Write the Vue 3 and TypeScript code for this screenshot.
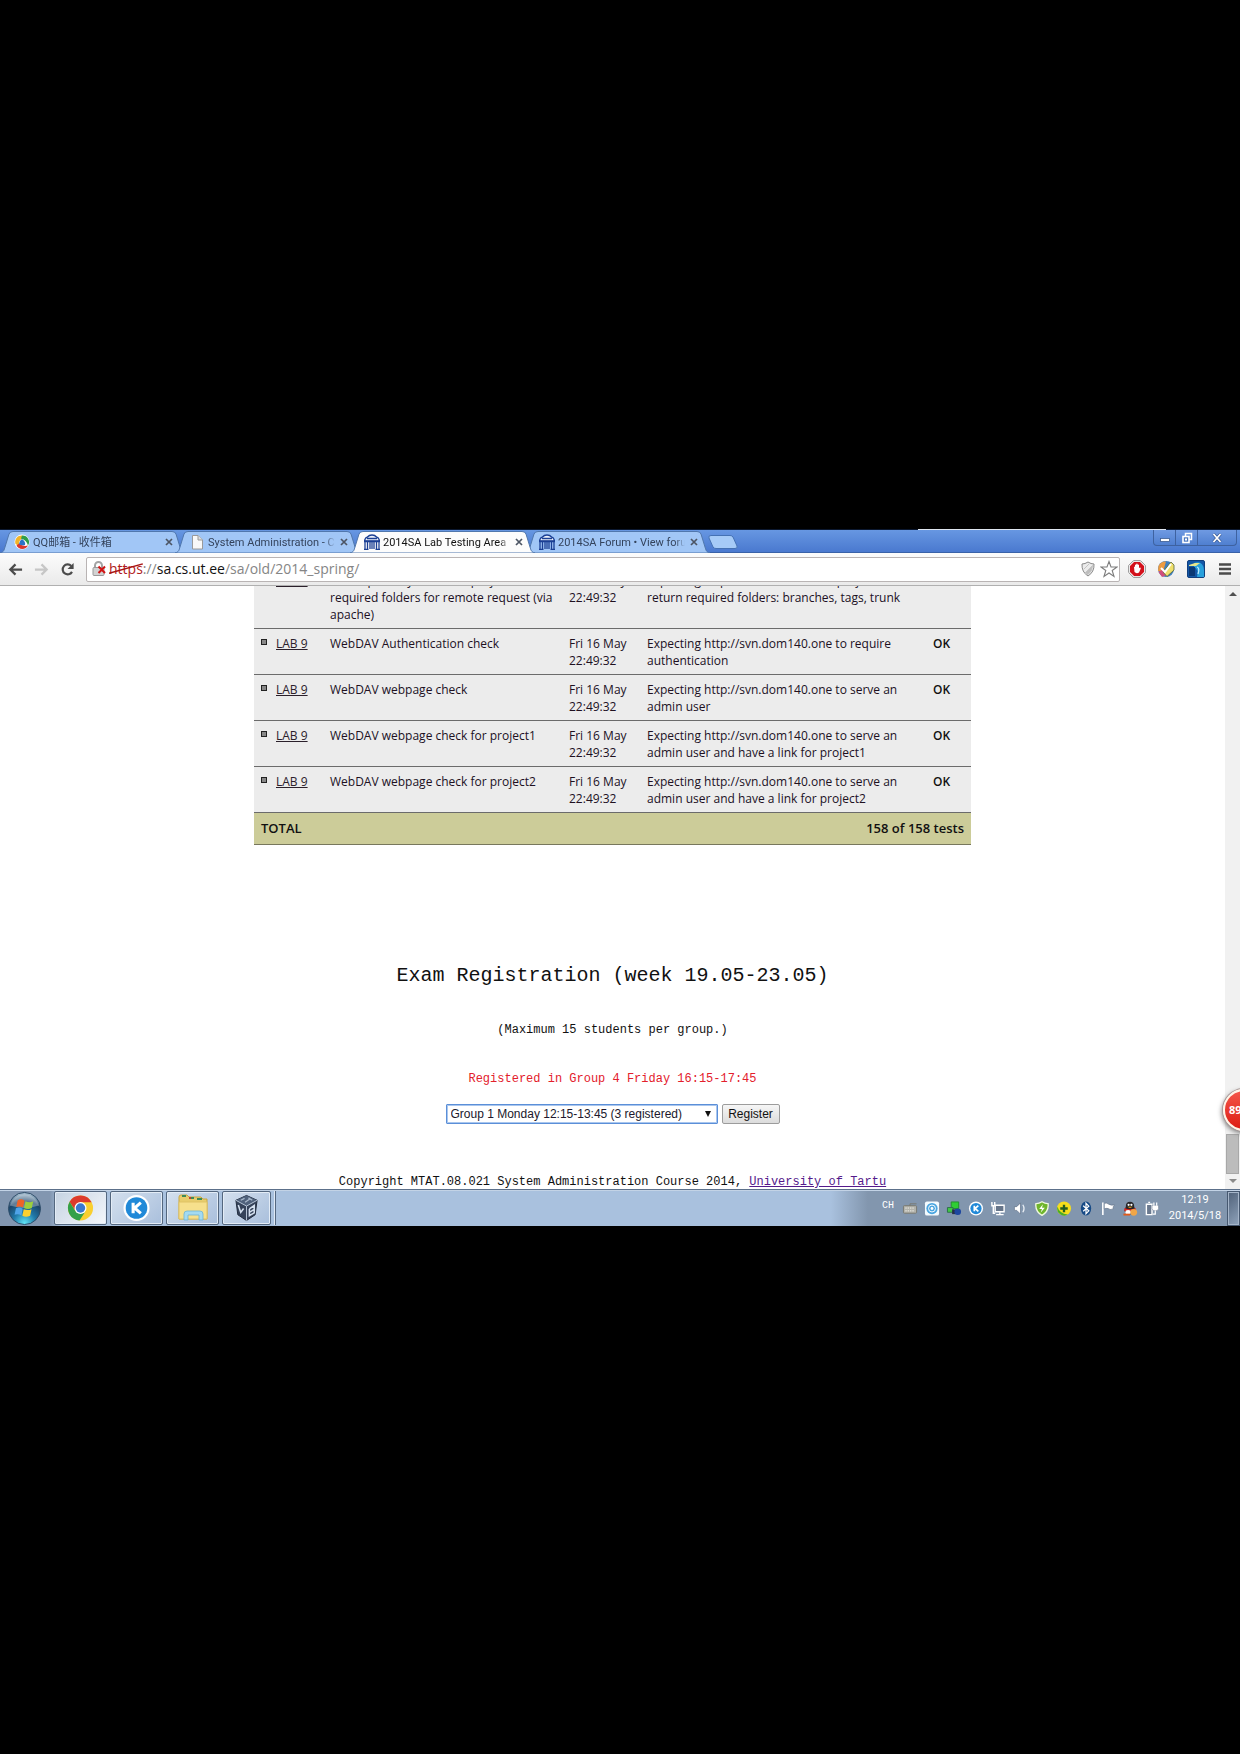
<script setup lang="ts">
import { ref } from 'vue'

interface Tab { title: string; icon: 'qq' | 'page' | 'uni'; active?: boolean }
interface Test { name: string; time: string; text: string; result: string }

const tabs: Tab[] = [
  { title: 'QQ邮箱 - 收件箱', icon: 'qq' },
  { title: 'System Administration - C', icon: 'page' },
  { title: '2014SA Lab Testing Area f', icon: 'uni', active: true },
  { title: '2014SA Forum • View foru', icon: 'uni' },
]

const time = 'Fri 16 May\n22:49:32'
const tests: Test[] = [
  { name: 'SVN repository check for project2\nrequired folders for remote request (via\napache)', time, text: 'Expecting http://svn.dom140.one/project2 to\nreturn required folders: branches, tags, trunk', result: 'OK' },
  { name: 'WebDAV Authentication check', time, text: 'Expecting http://svn.dom140.one to require\nauthentication', result: 'OK' },
  { name: 'WebDAV webpage check', time, text: 'Expecting http://svn.dom140.one to serve an\nadmin user', result: 'OK' },
  { name: 'WebDAV webpage check for project1', time, text: 'Expecting http://svn.dom140.one to serve an\nadmin user and have a link for project1', result: 'OK' },
  { name: 'WebDAV webpage check for project2', time, text: 'Expecting http://svn.dom140.one to serve an\nadmin user and have a link for project2', result: 'OK' },
]

const groups = ['Group 1 Monday 12:15-13:45 (3 registered)']
const group = ref(groups[0])
</script>

<template>
  <div class="stage">
    <div class="screen">
      <div class="behind"></div>
      <header class="titlebar">
        <nav class="tabs">
          <div v-for="t in tabs" :key="t.title" class="tab" :class="{ active: t.active }">
            <svg class="shape" viewBox="0 0 185 22" preserveAspectRatio="none">
              <path d="M0 22 C4 21 4 19 5 16 L9 3 Q10 .5 13 .5 H172 Q175 .5 176 3 L180 16 C181 19 181 21 185 22 Z" />
            </svg>
            <svg v-if="t.icon === 'qq'" class="fav" viewBox="0 0 16 16">
              <circle cx="8" cy="8" r="7.500" fill="#fff" />
              <path d="M1.500 10 A6.500 6.500 0 0 1 8 1.500 L10 4.500 Q4.500 5 5 11 Q3 11.500 1.500 10" fill="#f0b429" />
              <path d="M8 1.500 A6.500 6.500 0 0 1 14 11.500 Q12.500 6 7 4.500 Z" fill="#2f9e4a" />
              <path d="M2.500 11.500 A6.500 6.500 0 0 0 14 11.500 Q9 13 5 9.500 Z" fill="#d9372c" />
              <path d="M8 5 Q12 8 11 11 Q7 12 5 10 Q5.500 6.500 8 5 Z" fill="#2a72c8" />
            </svg>
            <svg v-else-if="t.icon === 'page'" class="fav" viewBox="0 0 16 16">
              <path d="M3.500 1.500 H9 L13.500 6 V15 H3.500 Z" fill="#f8f8f8" stroke="#9a9a9a" />
              <path d="M9 1.500 V6 H13.500" fill="#ddd" stroke="#9a9a9a" />
            </svg>
            <svg v-else class="fav" viewBox="0 0 16 16">
              <path d="M.5 7 Q1 3.500 3.500 3 Q5 1 8 1 Q11 1 12.500 3 Q15 3.500 15.500 7 Z" fill="#eef3fb" stroke="#1b3f94" stroke-width="1.300" />
              <path d="M0 7.500 H16 M3 4.500 H13 M1 8 V16 M3.500 8 V16 M6 8 V15 M8 8 V15 M10 8 V15 M12.500 8 V16 M15 8 V16 M0 15.500 H4.500 M11.500 15.500 H16" stroke="#1b3f94" stroke-width="1.300" fill="none" />
            </svg>
            <span class="title">{{ t.title }}</span>
            <button class="close" aria-label="Close tab">
              <svg viewBox="0 0 8 8"><path d="M1 1 L7 7 M7 1 L1 7" stroke="#4c5564" stroke-width="1.700" /></svg>
            </button>
          </div>
        </nav>
        <button class="newtab" aria-label="New tab">
          <svg viewBox="0 0 30 14"><path d="M3 .5 H22 Q24 .5 25 2 L29 11 Q30 13.500 27 13.500 H8 Q6 13.500 5 12 L1 3 Q0 .5 3 .5" fill="#a6cbf7" stroke="#4572b4" /></svg>
        </button>
        <div class="winctl">
          <button aria-label="Minimize"><svg viewBox="0 0 12 12"><rect x="1.500" y="6.500" width="9" height="3" fill="#fff" stroke="#3c5c92" stroke-width=".8" /></svg></button>
          <button aria-label="Restore"><svg viewBox="0 0 12 12"><path d="M4.500 4 V1.500 H10.500 V7.500 H8" fill="none" stroke="#fff" stroke-width="1.500" /><rect x="2" y="4.500" width="6" height="6" fill="#4c78c0" stroke="#fff" stroke-width="1.600" /><rect x="4" y="6.500" width="2" height="2" fill="#fff" /></svg></button>
          <button class="wide" aria-label="Close"><svg viewBox="0 0 12 12"><path d="M2.500 2 L9.500 10 M9.500 2 L2.500 10" stroke="#35558f" stroke-width="3" /><path d="M2.500 2 L9.500 10 M9.500 2 L2.500 10" stroke="#fff" stroke-width="1.800" /></svg></button>
        </div>
      </header>

      <div class="toolbar">
        <div class="nav">
          <button aria-label="Back"><svg viewBox="0 0 16 16"><path d="M15 8 H3 M8 2.500 L2.500 8 L8 13.500" fill="none" stroke="#4b4b4b" stroke-width="2.400" /></svg></button>
          <button aria-label="Forward"><svg viewBox="0 0 16 16"><path d="M1 8 H13 M8 2.500 L13.500 8 L8 13.500" fill="none" stroke="#c6c6c6" stroke-width="2.400" /></svg></button>
          <button aria-label="Reload"><svg viewBox="0 0 16 16"><path d="M12.800 10.500 A5.300 5.300 0 1 1 12 4.200" fill="none" stroke="#4b4b4b" stroke-width="2.300" /><path d="M14.500 1 V7.500 H8 Z" fill="#4b4b4b" /></svg></button>
        </div>
        <div class="omnibox">
          <svg class="lock" viewBox="0 0 14 16">
            <path d="M3 7 V4.500 A3.500 3.500 0 0 1 10 4.500 V7" fill="none" stroke="#a4a4a4" stroke-width="2" />
            <rect x="1" y="6.500" width="11" height="8" rx="1" fill="#d2d2d2" stroke="#999" />
            <path d="M6.500 5.500 L13 12 M13 5.500 L6.500 12" stroke="#d21414" stroke-width="2" />
          </svg>
          <div class="url"><span class="scheme">https<svg viewBox="0 0 32 14" preserveAspectRatio="none"><path d="M0 12 L32 1" stroke="#a81313" stroke-width="1.600" /></svg></span>://<span class="host">sa.cs.ut.ee</span>/sa/old/2014_spring/</div>
          <svg class="mini" viewBox="0 0 16 16"><path d="M8 1 Q11 3 14 3 Q14.500 11 8 15 Q1.500 11 2 3 Q5 3 8 1Z" fill="#ececec" stroke="#8a8a8a" /><path d="M5 12 L12.500 4.500 Q12.500 10 8 13.500Z M4 8 L9 3" fill="#bdbdbd" stroke="#c4c4c4" /></svg>
          <svg class="mini star" viewBox="0 0 18 18"><path d="M9 1.500 L11 7 H17 L12.200 10.500 L14 16.500 L9 13 L4 16.500 L5.800 10.500 L1 7 H7 Z" fill="#fff" stroke="#7d7d7d" stroke-width="1.100" /></svg>
        </div>
        <div class="ext">
          <button aria-label="AdBlock"><svg viewBox="0 0 18 18"><path d="M5.500 .7 H12.500 L17.300 5.500 V12.500 L12.500 17.300 H5.500 L.7 12.500 V5.500 Z" fill="#fff" stroke="#8b8b8b" /><path d="M6 2 H12 L16 6 V12 L12 16 H6 L2 12 V6 Z" fill="#d3111b" /><path d="M6 7 Q6.500 6 7 7 V5 Q7.500 4 8.200 5 V4 Q9 3.200 9.700 4 V5 Q10.500 4 11 5 V8 Q12.500 7 12.800 8.500 L11 12.500 Q8.500 14 6.500 12 Z" fill="#fff" /></svg></button>
          <button aria-label="Editor"><svg viewBox="0 0 18 18"><circle cx="9" cy="9" r="8" fill="#3f7fbe" /><path d="M1.500 6 Q4 1 9 1.500 L6 12 L1 11 Z" fill="#ed9b3f" /><path d="M1.500 12 L6 9 L10 15 L5 17 Z" fill="#d14f7c" /><path d="M6 12 L14 2 L17 5 V10 L10 16.500 Z" fill="#efe06c" stroke="#56663c" stroke-width=".8" /><path d="M4 8 L8 12 L14 4" fill="none" stroke="#fff" stroke-width="2" /></svg></button>
          <button aria-label="Capture"><svg viewBox="0 0 18 18"><rect x=".5" y=".5" width="17" height="17" rx="1.500" fill="#1356a6" stroke="#103f7d" /><path d="M7 3 Q16 0 17 10 V17 H10 Q12 9 7 7 Z" fill="#28a0dc" /><path d="M2 5 L8 3 H13 L9 6 H2 Z" fill="#e6e58b" /><path d="M2 7 H8 V16 H2 Z" fill="#093774" /><path d="M10 7 Q13 8 11 14" stroke="#bceaff" fill="none" stroke-width="1.300" /></svg></button>
          <button aria-label="Menu"><svg viewBox="0 0 18 18"><path d="M3 4.500 H15 M3 9 H15 M3 13.500 H15" stroke="#4b4b4b" stroke-width="2.400" /></svg></button>
        </div>
      </div>

      <div class="viewport">
        <main class="content">
          <table class="results">
            <colgroup><col class="c1" /><col class="c2" /><col class="c3" /><col class="c4" /><col class="c5" /><col class="c6" /></colgroup>
            <tbody>
              <tr v-for="(t, i) in tests" :key="i">
                <td><i class="bullet"></i></td>
                <td><a href="#">LAB 9</a></td>
                <td>{{ t.name }}</td>
                <td>{{ t.time }}</td>
                <td>{{ t.text }}</td>
                <td class="ok">{{ t.result }}</td>
              </tr>
            </tbody>
            <tfoot>
              <tr><th colspan="3" class="total">TOTAL</th><th colspan="3" class="count">158 of 158 tests</th></tr>
            </tfoot>
          </table>
          <h2>Exam Registration (week 19.05-23.05)</h2>
          <p class="max">(Maximum 15 students per group.)</p>
          <p class="registered">Registered in Group 4 Friday 16:15-17:45</p>
          <form class="register" @submit.prevent>
            <div class="pick">
              <select v-model="group" aria-label="Group">
                <option v-for="g in groups" :key="g" :value="g">{{ g }}</option>
              </select>
              <svg viewBox="0 0 6 6"><path d="M0 0 H6 L3 6 Z" fill="#111" /></svg>
            </div>
            <button type="submit">Register</button>
          </form>
          <footer>Copyright MTAT.08.021 System Administration Course 2014, <a href="#">University of Tartu</a></footer>
        </main>
        <div class="scrollbar">
          <svg viewBox="0 0 8 4"><path d="M0 4 L4 0 L8 4 Z" fill="#505050" /></svg>
          <span class="thumb"></span>
          <svg viewBox="0 0 8 4"><path d="M0 0 L4 4 L8 0 Z" fill="#8a8a8a" /></svg>
        </div>
        <div class="badge">89</div>
      </div>

      <footer class="taskbar">
        <button class="start" aria-label="Start">
          <svg viewBox="0 0 36 36">
            <defs>
              <radialGradient id="orb" cx=".5" cy=".95" r=".9"><stop offset="0" stop-color="#5fe3f5" /><stop offset=".4" stop-color="#1f78a8" /><stop offset=".75" stop-color="#1d4468" /><stop offset="1" stop-color="#9cb6c9" /></radialGradient>
            </defs>
            <circle cx="18" cy="18" r="16.500" fill="url(#orb)" stroke="#2e4c68" />
            <path d="M3 15 A15.500 15.500 0 0 1 33 15 Q18 20 3 15" fill="#fff" opacity=".3" />
            <path d="M11 9.500 Q14.500 7.500 18 10 L16.500 17 Q13 15 9.500 16.500 Z" fill="#ef6328" />
            <path d="M19 10.500 Q23 12.500 27 10.500 L25.500 17.500 Q21.500 19.500 17.500 17.500 Z" fill="#9ccf3d" />
            <path d="M9.200 17.800 Q12.500 16 16.200 18.200 L14.800 25 Q11 23 7.800 24.500 Z" fill="#4fa3e8" />
            <path d="M17.200 18.800 Q21.500 20.500 25.200 18.700 L23.800 25.500 Q19.500 27.500 15.800 25.500 Z" fill="#fcd030" />
          </svg>
        </button>
        <button class="task on" aria-label="Chrome">
          <svg viewBox="0 0 28 28"><circle cx="14" cy="14" r="13" fill="#f9cf2f" /><path d="M2.700 7.500 A13 13 0 0 1 25.500 8 L14 8 L9 17 Z" fill="#dd3a2c" /><path d="M2.700 7.500 A13 13 0 0 0 13 27 L19 17.500 L9 17.500 Z" fill="#33a04a" /><circle cx="14" cy="14" r="6.200" fill="#fff" /><circle cx="14" cy="14" r="4.900" fill="#3a78d0" /></svg>
        </button>
        <button class="task" aria-label="Music">
          <svg viewBox="0 0 28 28"><circle cx="14" cy="14" r="13.500" fill="#fff" /><circle cx="14" cy="14" r="11.200" fill="#2089d8" /><path d="M10.500 8.500 V19.500 M18.500 8.500 L12 14 L18.500 19.500" fill="none" stroke="#fff" stroke-width="3.200" /></svg>
        </button>
        <button class="task" aria-label="Explorer">
          <svg class="folder" viewBox="0 0 32 28"><path d="M2 3 Q2 1 4 1 H10 L12 3 H24 L26 5 H30 V25 H2 Z" fill="#e8cd6c" stroke="#c9a741" /><path d="M5 2 H9 M13 4 H17 M20 5 H25" stroke="#3f8b58" stroke-width="2" /><path d="M12 4 H14" stroke="#c5402e" stroke-width="2" /><path d="M2 8 H30 V25 H2 Z" fill="#f6e08c" stroke="#dfc264" /><path d="M7 26 V20 Q7 17 10 17 H23 Q26 17 26 20 V26 H22 V21 H11 V26 Z" fill="#a3daf1" stroke="#6fb4d4" stroke-width=".8" /></svg>
        </button>
        <button class="task last" aria-label="VirtualBox">
          <svg viewBox="0 0 28 28"><path d="M14 1 L25 6 L23 21 L14 27 L5 21 L3 6 Z" fill="#35435a" stroke="#202b3c" /><path d="M14 1 L25 6 L14 12 L3 6 Z" fill="#50627c" /><path d="M8 6 L12 4 M12.500 8 L17 5 M16 3.500 L20 6" stroke="#a9b9cc" stroke-width="1.300" /><path d="M3 6 L14 12 V27 M25 6 L14 12" stroke="#b9c8da" fill="none" /><path d="M5.500 11 L8 18.500 L11 14.500 M17 15 V22 L22 19 V11.500 L17 15 M17 18.500 L22 15.500" fill="none" stroke="#d3dfee" stroke-width="1.600" /></svg>
        </button>
        <span class="stack"></span>
        <div class="tray">
          <span class="lang">CH</span>
          <svg viewBox="0 0 16 16"><rect x="1" y="5" width="14" height="8" rx="1" fill="#b3b3ac" stroke="#77776f" /><path d="M3 7.500 H13 M3 10.500 H13" stroke="#f2f2ea" stroke-dasharray="1.500 1" /><path d="M8 5 V3 H15" stroke="#77776f" fill="none" /></svg>
          <svg viewBox="0 0 16 16"><rect x=".5" y=".5" width="15" height="15" rx="2" fill="#f3fafe" /><circle cx="8" cy="8" r="6" fill="#4aa5e0" /><circle cx="8" cy="8" r="3.700" fill="none" stroke="#fff" /><circle cx="8" cy="8" r="1.500" fill="#fff" /></svg>
          <svg viewBox="0 0 16 16"><path d="M5 1 H13 V8 H5 Z" fill="#2fce34" stroke="#228e2e" /><path d="M1 7 H7 V12 H1 Z" fill="#41c845" stroke="#2c6e4a" /><path d="M6 9 H14 V14 H6 Z" fill="#25304a" /><circle cx="12" cy="11.500" r="3.500" fill="#1d47a0" /></svg>
          <svg viewBox="0 0 16 16"><circle cx="8" cy="8" r="7.500" fill="#fff" /><circle cx="8" cy="8" r="6" fill="#2089d8" /><path d="M6.200 5 V11 M10.500 5 L7 8 L10.500 11" fill="none" stroke="#fff" stroke-width="1.800" /></svg>
          <svg viewBox="0 0 16 16"><path d="M5 4.500 H14.500 V11.500 H5 Z" fill="#66758a" stroke="#fff" stroke-width="1.500" /><path d="M10 12 V14 M6 14.500 H14" stroke="#fff" stroke-width="1.500" /><path d="M1.500 1 V5 H4.500 V1 M3 5 V13 H5" fill="none" stroke="#fff" stroke-width="1.500" /></svg>
          <svg viewBox="0 0 16 16"><path d="M2 6 H4.500 L8.500 2 V14 L4.500 10 H2 Z" fill="#fff" stroke="#65758c" stroke-width=".8" /><path d="M11 4 Q13.500 8 11 12" fill="none" stroke="#e8edf3" stroke-width="1.400" /></svg>
          <svg viewBox="0 0 16 16"><path d="M8 .8 Q11.500 3 14.500 2.800 Q15.500 11 8 15.300 Q.5 11 1.500 2.800 Q4.500 3 8 .8Z" fill="#6fb52c" stroke="#eff8df" stroke-width="1.400" /><path d="M9 3.500 L5 8.500 H8 L6.500 12.500 L11 7.200 H8 Z" fill="#fff" /></svg>
          <svg viewBox="0 0 16 16"><circle cx="8" cy="8" r="7.500" fill="#f6de1c" /><path d="M1 6 A7.500 7.500 0 0 0 12 14.500 Q3 13 1 6" fill="#48ad2a" /><path d="M8 4 V12 M4 8 H12" stroke="#245d20" stroke-width="2.500" /></svg>
          <svg viewBox="0 0 16 16"><ellipse cx="8" cy="8" rx="5.500" ry="7.500" fill="#164a86" /><path d="M5 5 L11 10.500 L8 13.500 V2.500 L11 5.500 L5 11" fill="none" stroke="#fff" stroke-width="1.300" /></svg>
          <svg viewBox="0 0 16 16"><path d="M2.500 1.500 V15" stroke="#fff" stroke-width="1.700" /><path d="M4 2.500 Q6.500 1.500 9 3.500 Q11.500 5 15 4 Q13 6 13.500 8.500 Q10 10 8 8 Q6 7.500 4 8.500Z" fill="#fff" stroke="#5f6f86" stroke-width=".7" /></svg>
          <svg viewBox="0 0 16 16"><path d="M3.500 6 Q3.500 .8 8 .8 Q12.500 .8 12.500 6 L14 10 L12 14 H4 L2 10 Z" fill="#26262a" /><circle cx="6.500" cy="4" r="1.200" fill="#fff" /><circle cx="9.500" cy="4" r="1.200" fill="#fff" /><path d="M5 6 H11 L8 7.500Z" fill="#f2a516" /><path d="M2 7.500 Q8 10 14 7.500 L14 11 H2Z" fill="#dc2620" /><ellipse cx="6" cy="12" rx="3" ry="2.500" fill="#fff" /><path d="M1 13.500 H8 V15.500 H1Z" fill="#e25a18" /><circle cx="12" cy="12" r="3.600" fill="#f0a648" /></svg>
          <svg viewBox="0 0 16 16"><path d="M2 3.500 H8 V14.500 H2 Z M4 1.500 H6" fill="#6b7a90" stroke="#fff" stroke-width="1.500" /><path d="M8 4.500 H15 V8 Q15 10.500 11.500 10.500 Q8 10.500 8 8 Z" fill="#fff" stroke="#6b7a90" stroke-width=".6" /><path d="M10 1.500 V5 M13 1.500 V5 M11.500 10 V14 H9" fill="none" stroke="#fff" stroke-width="1.300" /></svg>
        </div>
        <time class="clock">12:19<br />2014/5/18</time>
        <button class="peek" aria-label="Show desktop"></button>
      </footer>
    </div>
  </div>
</template>

<style>
body { background: #000; }
</style>

<style scoped>
* { box-sizing: border-box; }
button { border: 0; background: none; padding: 0; margin: 0; display: flex; align-items: center; justify-content: center; font: inherit; }
svg { display: block; flex: none; }
.stage { min-height: 100vh; padding-top: 529px; background: #000; }
.screen { display: flex; flex-direction: column; width: 100%; overflow: hidden; }
.behind { height: 1px; background: linear-gradient(90deg, #0b1830 0 74%, #dfe6f0 74% 94%, #0b1830 94%); }

.titlebar { display: flex; height: 23px; align-items: flex-end; background: linear-gradient(#6797e2, #4a79cf); border-bottom: 1px solid #3a62a8; }
.tabs { display: flex; align-self: flex-end; margin-bottom: -1px; }
.tab { position: relative; width: 185px; height: 22px; margin-right: -10px; padding: 0 10px 0 14px; display: flex; align-items: center; gap: 3px; color: #34435c; }
.shape { position: absolute; inset: 0; width: 100%; height: 100%; }
.shape path { fill: #a1c6f6; stroke: #5077ad; stroke-width: 1; }
.tab.active { z-index: 2; color: #111; }
.active .shape path { fill: #fcfcfc; }
.fav { position: relative; width: 16px; height: 16px; }
.title { position: relative; flex: 1; min-width: 0; overflow: hidden; white-space: nowrap; font: 11px/20px Roboto, "Noto Sans CJK SC", sans-serif; padding-top: 1px; mask-image: linear-gradient(90deg, #000 92%, transparent); }
.close { position: relative; width: 12px; height: 14px; }
.close svg { width: 8px; height: 8px; }
.newtab { margin: 0 0 3px 8px; }
.newtab svg { width: 30px; height: 14px; }
.winctl { display: flex; align-self: flex-start; margin: 0 3px 0 auto; height: 16px; border: 1px solid #3e62a0; border-top: 0; border-radius: 0 0 4px 4px; background: linear-gradient(#6f9ae2, #4f7fd0); }
.winctl button { width: 22px; border-right: 1px solid #3e62a0; }
.winctl .wide { width: 38px; border-right: 0; }
.winctl svg { width: 12px; height: 12px; }

.toolbar { display: flex; align-items: center; height: 33px; background: linear-gradient(#fcfcfc, #eaeaea); border-bottom: 1px solid #b0b0b0; }
.nav { display: flex; width: 86px; padding-left: 2px; }
.nav button { width: 26px; }
.nav svg { width: 15px; height: 15px; }
.omnibox { flex: 1; display: flex; align-items: center; height: 25px; padding: 0 1px 0 5px; background: #fff; border: 1px solid #b9b4b4; border-radius: 2px; }
.lock { width: 14px; height: 16px; }
.url { flex: 1; margin-left: 3px; font: 14px/20px "Open Sans", sans-serif; color: #858585; white-space: nowrap; }
.scheme { position: relative; color: #b01c1c; }
.scheme svg { position: absolute; left: 0; top: 4px; width: 100%; height: 12px; }
.host { color: #111; }
.mini { width: 16px; height: 16px; margin-right: 4px; }
.star { width: 18px; height: 18px; margin-right: 0; }
.ext { display: flex; justify-content: space-between; width: 120px; padding: 0 6px 0 8px; }
.ext svg { width: 18px; height: 18px; }

.viewport { position: relative; display: flex; height: 603px; overflow: hidden; background: #fff; }
.content { flex: 1; min-width: 0; display: flex; flex-direction: column; align-items: center; font: 12px/16px "Liberation Mono", monospace; color: #111; }
.results { width: 717px; max-width: 100%; flex: none; margin-top: -20px; table-layout: fixed; border-collapse: collapse; font: 12px/17px "Open Sans", sans-serif; color: #20101f; }
.c1 { width: 22px; }
.c2 { width: 54px; }
.c3 { width: 239px; }
.c4 { width: 78px; }
.c6 { width: 59px; }
.results td { padding: 6px 0 5px; vertical-align: top; white-space: pre; background: #ececec; border-bottom: 1px solid #6b6b6b; }
.results td a { color: #2b202b; }
.results .ok { text-align: center; font-weight: 600; color: #111; }
.bullet { display: block; width: 6px; height: 6px; margin: 4px 0 0 7px; border: 1px solid #222; background: #888; }
.results th { height: 32px; padding: 0 7px; background: #cccc99; border-bottom: 1px solid #77775c; font-size: 13px; font-weight: 600; color: #111; }
.total { text-align: left; }
.count { text-align: right; }
h2 { margin: 119px 0 0; font-size: 20px; line-height: 24px; font-weight: 400; }
p { margin: 0; }
.max { margin-top: 34px; }
.registered { margin-top: 33px; color: #e3202b; }
.register { display: flex; gap: 4px; margin-top: 17px; font: 12px/18px "Liberation Sans", Arial, sans-serif; }
.pick { position: relative; }
.pick select { appearance: none; width: 272px; height: 20px; padding: 0 4px; border: 1px solid #5b8fd8; outline: 1px solid #a9c6ee; outline-offset: -2px; border-radius: 1px; background: #fff; color: #20182c; font: inherit; }
.pick svg { position: absolute; right: 7px; top: 7px; width: 6px; height: 6px; }
.register button { width: 58px; height: 20px; border: 1px solid #9c9c9c; border-radius: 2px; background: linear-gradient(#f6f6f6, #dcdcdc); color: #111; }
.content footer { margin-top: 50px; white-space: nowrap; }
.content footer a { color: #551a8b; }
.scrollbar { width: 15px; display: flex; flex-direction: column; align-items: center; padding: 6px 0; background: #f1f1f1; }
.scrollbar svg { width: 8px; height: 4px; }
.thumb { width: 13px; height: 40px; margin: auto 0 5px; background: #bcbcbc; border: 1px solid #a8a8a8; }
.badge { position: absolute; right: -25px; bottom: 58px; width: 42px; height: 42px; padding-left: 4px; border: 2px solid #fff5e8; border-radius: 50%; background: linear-gradient(#f4574a, #dd1c12); box-shadow: 0 0 0 1px #a99, -1px 2px 5px #777; color: #fff; font: bold 11px/38px "Noto Sans", sans-serif; }

.taskbar { display: flex; align-items: center; height: 37px; border-top: 1px solid #5c708a; background: linear-gradient(90deg, #8296b0 0 4%, #a9c1de 5% 67%, #8296ae 70%); box-shadow: inset 0 1px #c3d3e6; }
.start { width: 54px; padding-right: 5px; }
.start svg { width: 35px; height: 35px; }
.task { width: 53px; height: 34px; margin-right: 3px; border: 1px solid #54677f; border-radius: 2px; background: linear-gradient(135deg, #d4e0ee, #a9bfdc); box-shadow: inset 0 0 0 1px #e3ecf6; }
.task.on { background: linear-gradient(135deg, #c6d3e2, #f4f7fb); }
.task.last { width: 49px; margin-right: 0; }
.task svg { width: 27px; height: 28px; }
.task .folder { width: 32px; }
.stack { width: 5px; height: 34px; border-right: 1px solid #54677f; box-shadow: inset -1px 0 #dfe9f5; }
.tray { display: flex; align-items: center; margin-left: auto; }
.tray svg { width: 22px; height: 15px; }
.lang { width: 22px; text-align: center; color: #fff; font: 10px/14px "Liberation Mono", monospace; margin-bottom: 4px; }
.clock { width: 64px; text-align: center; color: #fff; font: 11px/16px Roboto, sans-serif; }
.peek { width: 13px; height: 35px; border: 1px solid #465870; background: linear-gradient(135deg, #4f6179, #8fa3bb); box-shadow: inset 0 0 0 1px #a5b5c9; }
</style>
